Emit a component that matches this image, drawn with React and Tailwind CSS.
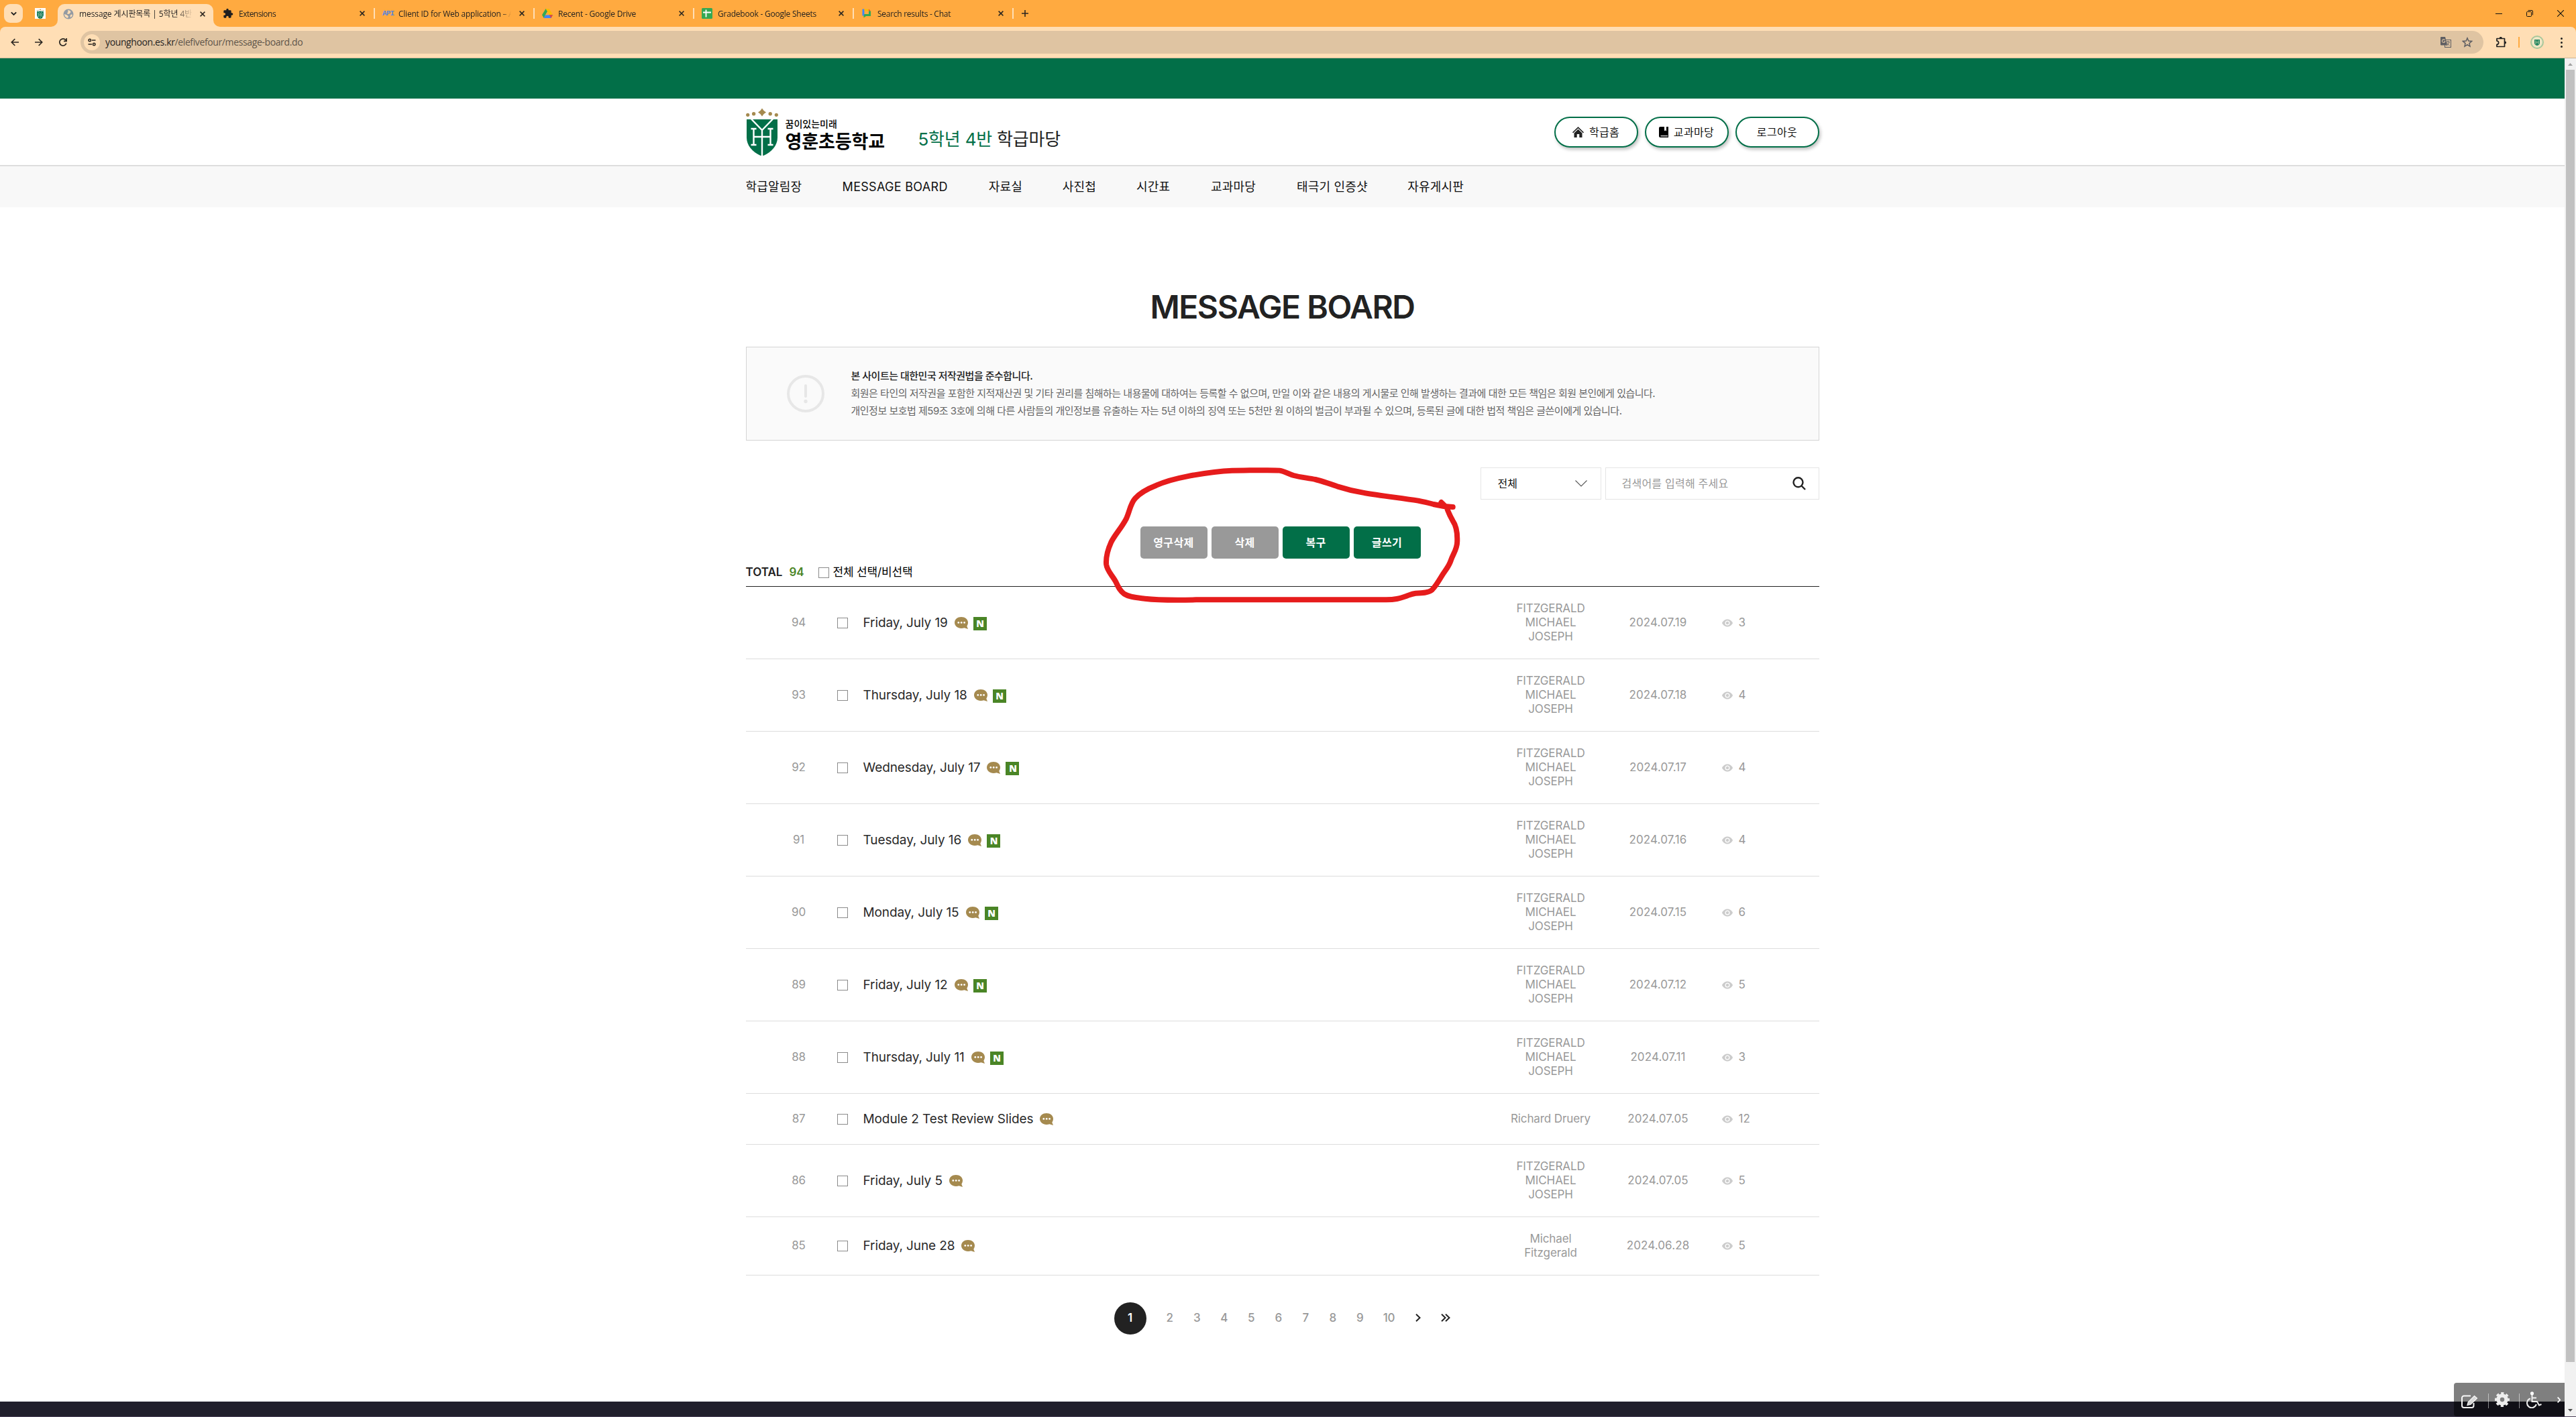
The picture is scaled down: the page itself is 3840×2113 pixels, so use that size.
import React from "react";

const tabs = [
  { icon: "ext", title: "Extensions", cls: "tracking-[-0.53px]" },
  { icon: "api", title: "Client ID for Web application – API", cls: "tracking-[-0.24px]" },
  { icon: "drive", title: "Recent - Google Drive", cls: "tracking-[-0.2px]" },
  { icon: "sheets", title: "Gradebook - Google Sheets", cls: "tracking-[-0.22px]" },
  { icon: "chat", title: "Search results - Chat", cls: "tracking-[-0.27px]" },
];

const nav = [
  ["학급알림장", "w-[84px]"],
  ["MESSAGE BOARD", "w-[158px] tracking-[0.3px]"],
  ["자료실", "w-[50px]"],
  ["사진첩", "w-[50px]"],
  ["시간표", "w-[51px]"],
  ["교과마당", "w-[68px]"],
  ["태극기 인증샷", "w-[105px]"],
  ["자유게시판", "w-[85px]"],
];

const FMJ = ["FITZGERALD", "MICHAEL", "JOSEPH"];
const rows = [
  { no: 94, title: "Friday, July 19", isNew: true, author: FMJ, date: "2024.07.19", views: 3, h: "h-[108px]" },
  { no: 93, title: "Thursday, July 18", isNew: true, author: FMJ, date: "2024.07.18", views: 4, h: "h-[108px]" },
  { no: 92, title: "Wednesday, July 17", isNew: true, author: FMJ, date: "2024.07.17", views: 4, h: "h-[108px]" },
  { no: 91, title: "Tuesday, July 16", isNew: true, author: FMJ, date: "2024.07.16", views: 4, h: "h-[108px]" },
  { no: 90, title: "Monday, July 15", isNew: true, author: FMJ, date: "2024.07.15", views: 6, h: "h-[108px]" },
  { no: 89, title: "Friday, July 12", isNew: true, author: FMJ, date: "2024.07.12", views: 5, h: "h-[108px]" },
  { no: 88, title: "Thursday, July 11", isNew: true, author: FMJ, date: "2024.07.11", views: 3, h: "h-[108px]" },
  { no: 87, title: "Module 2 Test Review Slides", author: ["Richard Druery"], date: "2024.07.05", views: 12, h: "h-[76px]" },
  { no: 86, title: "Friday, July 5", author: FMJ, date: "2024.07.05", views: 5, h: "h-[108px]" },
  { no: 85, title: "Friday, June 28", author: ["Michael", "Fitzgerald"], date: "2024.06.28", views: 5, h: "h-[87px]" },
];

function CloseX() {
  return (
    <svg className="size-2 shrink-0" viewBox="0 0 8 8" fill="none" stroke="#2b2620" strokeWidth="1.5">
      <path d="M0.6 0.6 7.4 7.4M7.4 0.6 0.6 7.4" />
    </svg>
  );
}

function Shield({ className }) {
  return (
    <svg className={className} viewBox="0 0 48 72" fill="none">
      <g fill="#a58a4f">
        <circle cx="2.7" cy="11.3" r="2.6" />
        <circle cx="11.6" cy="9.8" r="2.7" />
        <circle cx="36.2" cy="9.8" r="2.7" />
        <circle cx="45.3" cy="11.3" r="2.6" />
        <path d="M24 1.5 26.6 5 30 7.4 26.6 9.9 24 13.4 21.4 9.9 18 7.4 21.4 5Z" />
      </g>
      <path d="M1 18H47V45C47 58 37 68 24 73 11 68 1 58 1 45Z" fill="#026f48" />
      <g stroke="#fff" strokeWidth="2.4">
        <path d="M8 17.5 24 34 40 17.5M24 33V73" />
        <path d="M11.5 32V56M36.5 32V56M11.5 44H36.5" />
        <path d="M7.5 32H15.5M32.5 32H40.5M7.5 56H15.5M32.5 56H40.5" />
      </g>
    </svg>
  );
}

function TabIcon({ name }) {
  if (name === "ext")
    return (
      <svg className="size-4" viewBox="0 0 24 24" fill="#1f1f1f">
        <path d="M20.5 11H19V7a2 2 0 0 0-2-2h-4V3.500a2.500 2.500 0 0 0-5 0V5H4a2 2 0 0 0-2 2v3.800h1.500a2.700 2.700 0 0 1 0 5.400H2V20a2 2 0 0 0 2 2h3.800v-1.500a2.700 2.700 0 0 1 5.400 0V22H17a2 2 0 0 0 2-2v-4h1.500a2.500 2.500 0 0 0 0-5Z" />
      </svg>
    );
  if (name === "api")
    return <span className="font-['Liberation_Mono'] text-[11px] leading-4 font-bold tracking-[-0.8px] text-[#5a85dc]">API</span>;
  if (name === "drive")
    return (
      <svg className="h-3.5 w-4" viewBox="0 0 16 14">
        <path d="M5.500 0H10.500L5 9.300 2.700 14 0 9.300Z" fill="#34a853" />
        <path d="M5.500 0H10.500L16 9.300H10.800Z" fill="#fbbc04" />
        <path d="M5.200 9.300H16L13.400 14H2.600Z" fill="#4285f4" />
        <path d="M10.800 9.300H16L13.400 14Z" fill="#ea4335" />
        <path d="M8 4.400 10.800 9.300H5.200Z" fill="#ffaa40" />
      </svg>
    );
  if (name === "sheets")
    return (
      <svg className="size-4" viewBox="0 0 16 16">
        <rect width="16" height="16" rx="1.500" fill="#34a853" />
        <path d="M6.500 2.500V13.500M2 6.500H14" stroke="#fff" strokeWidth="1.800" />
      </svg>
    );
  return (
    <svg className="size-4" viewBox="0 0 16 16">
      <path d="M1.500 1.500H4.500V11.500H1.500Z" fill="#4285f4" />
      <path d="M4.500 1.500H11V4.500H4.500Z" fill="#fbbc04" />
      <path d="M11 1.500 14 4.500H11Z" fill="#ea4335" />
      <path d="M11 4.500H14V12H7L3.500 14.500V11.500L4.500 9H11Z" fill="#34a853" />
    </svg>
  );
}

function Browser() {
  return (
    <div className="h-[87px] font-['Open_Sans','Noto_Sans_CJK_KR',sans-serif] text-[#1f1f1f]">
      <div className="flex h-10 items-center bg-[#ffaa40] text-[12px] leading-4">
        <div className="ml-1.5 flex size-7 items-center justify-center rounded-[9px] bg-[#ffdeb5]">
          <svg className="h-[7px] w-[9px]" viewBox="0 0 9 7" fill="none" stroke="#1f1f1f" strokeWidth="1.800">
            <path d="M0.800 1.300 4.500 5 8.200 1.300" />
          </svg>
        </div>
        <div className="ml-[18px] flex size-4 items-center justify-center bg-white">
          <Shield className="h-[15px] w-2.5" />
        </div>
        <div className="relative ml-[18px] flex h-[34px] w-[232px] items-center self-end rounded-t-[10px] bg-[#ffdeb5] pb-[5px]">
          <svg className="absolute bottom-0 left-[-10px] size-2.5" viewBox="0 0 10 10" fill="#ffdeb5"><path d="M10 0V10H0A10 10 0 0 0 10 0Z" /></svg>
          <svg className="absolute right-[-10px] bottom-0 size-2.5" viewBox="0 0 10 10" fill="#ffdeb5"><path d="M0 0V10H10A10 10 0 0 1 0 0Z" /></svg>
          <svg className="ml-2 size-4" viewBox="0 0 16 16">
            <circle cx="8" cy="8" r="7.500" fill="#949ba3" />
            <path d="M7 2.500C9 2 11 3 11.500 5L9.500 7.500 7 8 6 6.500 7.500 5ZM2 8 6 9.500 8 11.500 7 14C4 13.500 2 11 2 8ZM12 8.500 14 9C13.500 11 12.500 12.500 11 13L10.500 10.500Z" fill="#ffdeb5" />
          </svg>
          <span className="ml-2 w-[170px] overflow-hidden whitespace-nowrap tracking-[-0.1px] [mask-image:linear-gradient(to_right,black_145px,transparent_170px)]">message 게시판목록 | 5학년 4반</span>
          <span className="ml-2.5"><CloseX /></span>
        </div>
        <div className="ml-[3px] flex">
          {tabs.map((t, i) => (
            <div key={i} className="flex h-7 w-[238px] items-center">
              <span className="ml-[11px] flex w-[18px] items-center justify-start"><TabIcon name={t.icon} /></span>
              <span className={"mt-px ml-[6px] w-[169px] overflow-hidden whitespace-nowrap [mask-image:linear-gradient(to_right,black_154px,transparent_168px)] " + t.cls}>{t.title}</span>
              <span className="ml-[11px]"><CloseX /></span>
              <span className="ml-auto h-4 w-0.5 bg-[#ffdeb5]" />
            </div>
          ))}
        </div>
        <svg className="ml-3 size-2.5" viewBox="0 0 10 10" stroke="#2b2620" strokeWidth="1.600"><path d="M5 0V10M0 5H10" /></svg>
        <div className="mr-[18px] ml-auto flex items-center gap-9">
          <svg className="size-2.5" viewBox="0 0 10 10" stroke="#111"><path d="M0 5.500H10" /></svg>
          <svg className="size-2.5" viewBox="0 0 10 10" fill="none" stroke="#111">
            <rect x="0.500" y="2.500" width="7" height="7" rx="1" />
            <path d="M2.500 0.500H8A1.500 1.500 0 0 1 9.500 2V7.500" />
          </svg>
          <svg className="size-2.5" viewBox="0 0 10 10" stroke="#111" strokeWidth="1.100"><path d="M0 0 10 10M10 0 0 10" /></svg>
        </div>
      </div>
      <div className="bg-[#ffaa40]">
        <div className="flex h-[46px] items-center rounded-t-lg bg-[#ffdeb5]">
          <div className="ml-4 flex gap-6 text-[#2b2620]">
            <svg className="size-3" viewBox="0 0 12 12" fill="none" stroke="currentColor" strokeWidth="1.700"><path d="M12 6H1.500M6.300 1 1.300 6 6.300 11" /></svg>
            <svg className="size-3" viewBox="0 0 12 12" fill="none" stroke="currentColor" strokeWidth="1.700"><path d="M0 6H10.500M5.700 1 10.700 6 5.700 11" /></svg>
            <svg className="size-3" viewBox="0 0 12 12" fill="none" stroke="currentColor" strokeWidth="1.700"><path d="M10.800 7.500A5.100 5.100 0 1 1 9.800 2.600L11 4" /><path d="M11.200 0V4.300H7" /></svg>
          </div>
          <div className="ml-5 flex h-[34px] w-[3582px] items-center rounded-full bg-[#dfc4a2]">
            <div className="ml-[5px] flex size-6 items-center justify-center rounded-full bg-[#ffdeb5]">
              <svg className="size-3" viewBox="0 0 12 12" fill="none" stroke="#2b2620" strokeWidth="1.600">
                <circle cx="2.800" cy="3" r="1.700" /><path d="M6 3H11.500M0.500 9H6" /><circle cx="9.200" cy="9" r="1.700" />
              </svg>
            </div>
            <span className="ml-2 text-[14px] leading-5 tracking-[-0.38px] whitespace-nowrap">younghoon.es.kr<span className="text-[#5e554a]">/elefivefour/message-board.do</span></span>
            <div className="mr-4 ml-auto flex items-center gap-4">
              <svg className="size-4" viewBox="0 0 16 16">
                <rect x="6.500" y="4.500" width="9" height="11" fill="none" stroke="#5e5e62" />
                <path d="M8.500 7.500H14M11.200 6V7.500M13 8C12 11 10.500 12 9 13M9.500 9C10.500 11 12 12 13.500 12.800" stroke="#5e5e62" fill="none" strokeWidth="0.900" />
                <path d="M1 0H7L10 12.500H1A1 1 0 0 1 0 11.500V1A1 1 0 0 1 1 0Z" fill="#5e5e62" />
                <path d="M6.500 4.800A2.300 2.300 0 1 0 6.800 7H4.800" stroke="#dfc4a2" fill="none" strokeWidth="1.100" />
              </svg>
              <svg className="size-4" viewBox="0 0 16 16" fill="none" stroke="#5e5e62" strokeWidth="1.500">
                <path d="M8 1.800 9.800 6.100 14.500 6.500 11 9.600 12 14.200 8 11.700 4 14.200 5 9.600 1.500 6.500 6.200 6.100Z" />
              </svg>
            </div>
          </div>
          <svg className="ml-[18px] h-4 w-[18px]" viewBox="0 0 18 16">
            <path d="M2 2.500H13.500V14.500H2V11.300A2.500 2.500 0 0 0 2 6Z" fill="none" stroke="#1f1f1f" strokeWidth="1.700" strokeLinejoin="round" />
            <path d="M5.700 2A2.100 2.100 0 0 1 9.900 2ZM14 6.400A2.100 2.100 0 0 1 14 10.600Z" fill="#1f1f1f" />
          </svg>
          <span className="ml-4 h-4 w-0.5 bg-[#ffaa40]" />
          <div className="ml-4 flex size-5 items-center justify-center rounded-full border-2 border-[#a9c79b] bg-[#efe6c4]">
            <svg className="size-2.5" viewBox="0 0 10 10"><path d="M1 1H9V6Q9 9 5 10 1 9 1 6Z" fill="#1f8360" /><path d="M3 2V8M7 2V8M3 5H7" stroke="#a9c79b" /></svg>
          </div>
          <div className="ml-[25px] flex flex-col gap-[3px]">
            <i className="size-[3px] rounded-full bg-[#1f1f1f]" /><i className="size-[3px] rounded-full bg-[#1f1f1f]" /><i className="size-[3px] rounded-full bg-[#1f1f1f]" />
          </div>
        </div>
      </div>
      <div className="h-px bg-[#c9b294]" />
    </div>
  );
}

function PillButton({ children }) {
  return (
    <button className="flex h-[46px] w-[125px] items-center justify-center gap-2 rounded-full border-2 border-[#026f48] bg-white text-[16px] tracking-[0.35px] text-[#111] shadow-[2px_3px_5px_rgba(0,0,0,0.25)]">
      {children}
    </button>
  );
}

function Header() {
  return (
    <div className="h-[101px] border-b-2 border-[#ddd] bg-white">
      <div className="mx-auto flex h-full w-[1600px] items-start">
        <Shield className="mt-[13px] h-[72px] w-12" />
        <div className="mt-[28px] ml-[11px] w-[150px] whitespace-nowrap text-black">
          <div className="text-[14px] leading-[20px] font-medium">꿈이있는미래</div>
          <div className="mt-[1px] text-[27px] leading-[31px] font-bold tracking-[-0.1px]">영훈초등학교</div>
        </div>
        <div className="mt-[43px] ml-[48px] text-[26px] leading-[36px] tracking-[-0.2px] whitespace-nowrap text-[#222]">
          <span className="text-[#026f48]">5학년 4반</span> 학급마당
        </div>
        <div className="mt-[27px] ml-auto flex gap-2.5">
          <PillButton>
            <svg className="h-4 w-[17px]" viewBox="0 0 17 16" fill="#222">
              <path d="M8.500 0 17 8.300 16 9.500 8.500 2.200 1 9.500 0 8.300Z" />
              <path d="M8.500 3.800 14.500 9.500V16H10.300V11H6.700V16H2.500V9.500Z" />
            </svg>
            <span>학급홈</span>
          </PillButton>
          <PillButton>
            <svg className="h-4 w-3.5" viewBox="0 0 14 16">
              <path d="M2 0H14V16H2A2 2 0 0 1 0 14V2A2 2 0 0 1 2 0Z" fill="#000" />
              <path d="M8 0H11V6.500L9.500 5.300 8 6.500Z" fill="#fff" />
              <path d="M2.500 12.800H13V14.500H2.500Z" fill="#bbb" />
            </svg>
            <span>교과마당</span>
          </PillButton>
          <PillButton><span>로그아웃</span></PillButton>
        </div>
      </div>
    </div>
  );
}

function Checkbox() {
  return <span className="block size-4 shrink-0 border border-[#8a8a8a] bg-white" />;
}

function Row({ r }) {
  return (
    <div className={"flex items-center border-b border-[#ddd] text-[17px] text-[#999] " + r.h}>
      <span className="ml-[44px] w-[70px] text-center tracking-[-0.2px]">{r.no}</span>
      <span className="ml-[22px]"><Checkbox /></span>
      <span className="ml-[23px] text-[19px] leading-6 tracking-[-0.1px] whitespace-nowrap text-[#2a2a2a]">{r.title}</span>
      <svg className="ml-2.5 h-[18px] w-5" viewBox="0 0 20 18">
        <path d="M10 0C15.500 0 20 3.500 20 8.300 20 10.500 19.300 12.400 18.300 13.800L20 18 14.500 16.300C13.200 16.700 11.700 16.900 10 16.900 4.500 16.900 0 13.200 0 8.400 0 3.500 4.500 0 10 0Z" fill="#a58a4f" />
        <g fill="#fff"><circle cx="5.800" cy="8.400" r="1.400" /><circle cx="10.200" cy="8.400" r="1.400" /><circle cx="14.600" cy="8.400" r="1.400" /></g>
      </svg>
      {r.isNew ? (
        <span className="mt-[2px] ml-2 flex size-5 items-center justify-center bg-[#4a8526] pl-px font-['Noto_Sans'] text-[14px] leading-5 font-black text-white">N</span>
      ) : null}
      <span className="mr-[10px] ml-auto flex w-[140px] flex-col text-center leading-[21px] tracking-[-0.1px] whitespace-nowrap">
        {r.author.map((a) => <span key={a}>{a}</span>)}
      </span>
      <span className="mr-[15px] w-[160px] text-center tracking-[0.1px]">{r.date}</span>
      <span className="flex w-[145px] items-center gap-[9px]">
        <svg className="h-3 w-4" viewBox="0 0 16 12">
          <path d="M0 6C2 2 5 0.500 8 0.500S14 2 16 6C14 10 11 11.500 8 11.500S2 10 0 6Z" fill="#ccc" />
          <circle cx="8" cy="6" r="2.900" fill="none" stroke="#fff" strokeWidth="1.300" />
        </svg>
        {r.views}
      </span>
    </div>
  );
}

function Pagination() {
  return (
    <div className="mt-[40px] ml-[549px] flex h-12 items-center text-[17px] font-medium text-[#999]">
      <span className="mr-[15px] flex size-12 items-center justify-center rounded-full bg-[#222] font-semibold text-white">1</span>
      {[2, 3, 4, 5, 6, 7, 8, 9].map((n) => (
        <span key={n} className="w-[40.500px] text-center">{n}</span>
      ))}
      <span className="w-[46px] text-center tracking-[-0.3px]">10</span>
      <svg className="mb-[2px] ml-[16px] h-3 w-2" viewBox="0 0 8 12" fill="none" stroke="#222" strokeWidth="2"><path d="M1 0.800 6.500 6 1 11.200" /></svg>
      <svg className="mb-[2px] ml-[30px] h-3 w-3.5" viewBox="0 0 14 12" fill="none" stroke="#222" strokeWidth="2"><path d="M1 0.800 6.500 6 1 11.200M7 0.800 12.500 6 7 11.200" /></svg>
    </div>
  );
}

function ActionButton({ children, tone }) {
  return (
    <button className={"h-12 w-[100px] rounded-[5px] text-[16px] font-bold tracking-[0.4px] text-white " + tone}>{children}</button>
  );
}

function Board() {
  return (
    <div className="mx-auto w-[1600px]">
      <h1 className="mt-[119px] text-center text-[48px] leading-[60px] font-semibold tracking-[-1.45px] text-[#222]">MESSAGE BOARD</h1>
      <div className="mt-[29px] flex h-[140px] items-center border border-[#d5d5d5] bg-[#fafafa]">
        <svg className="ml-[60px] size-14" viewBox="0 0 56 56" fill="none" stroke="#e7e7e7">
          <circle cx="28" cy="28" r="26" strokeWidth="4" />
          <path d="M28 16V32" strokeWidth="4" strokeLinecap="round" />
          <circle cx="28" cy="39.500" r="2.700" fill="#e7e7e7" stroke="none" />
        </svg>
        <div className="ml-10 text-[15px] leading-[26px] tracking-[-0.5px] whitespace-nowrap text-[#666]">
          <p className="font-medium text-[#222]">본 사이트는 대한민국 저작권법을 준수합니다.</p>
          <p>회원은 타인의 저작권을 포함한 지적재산권 및 기타 권리를 침해하는 내용물에 대하여는 등록할 수 없으며, 만일 이와 같은 내용의 게시물로 인해 발생하는 결과에 대한 모든 책임은 회원 본인에게 있습니다.</p>
          <p>개인정보 보호법 제59조 3호에 의해 다른 사람들의 개인정보를 유출하는 자는 5년 이하의 징역 또는 5천만 원 이하의 벌금이 부과될 수 있으며, 등록된 글에 대한 법적 책임은 글쓴이에게 있습니다.</p>
        </div>
      </div>
      <div className="mt-10 flex justify-end gap-1.5 text-[16px]">
        <div className="flex h-12 w-[180px] items-center justify-between border border-[#e5e5e5] pr-5 pl-[25px] text-[#111]">
          전체
          <svg className="h-2.5 w-[18px]" viewBox="0 0 18 10" fill="none" stroke="#555" strokeWidth="1.100"><path d="M0.500 0.500 9 9 17.500 0.500" /></svg>
        </div>
        <div className="flex h-12 w-[319px] items-center justify-between border border-[#e5e5e5] pr-[19px] pl-6 tracking-[0.23px] text-[#999]">
          검색어를 입력해 주세요
          <svg className="size-5" viewBox="0 0 20 20" fill="none" stroke="#222" strokeWidth="2.400"><circle cx="8.500" cy="8.300" r="7" /><path d="M13.500 13.500 19 19" /></svg>
        </div>
      </div>
      <div className="mt-10 ml-[588px] flex gap-1.5">
        <ActionButton tone="bg-[#999]">영구삭제</ActionButton>
        <ActionButton tone="bg-[#999]">삭제</ActionButton>
        <ActionButton tone="bg-[#026f48]">복구</ActionButton>
        <ActionButton tone="bg-[#026f48]">글쓰기</ActionButton>
      </div>
      <div className="flex h-[42px] items-center border-b border-[#222] text-[17px] whitespace-nowrap">
        <span className="w-[65px] font-semibold text-[#222]">TOTAL</span>
        <span className="w-[43px] font-semibold text-[#4a8526]">94</span>
        <Checkbox />
        <span className="ml-1.5 tracking-[-0.15px] text-black">전체 선택/비선택</span>
      </div>
      {rows.map((r) => <Row key={r.no} r={r} />)}
      <Pagination />
    </div>
  );
}

function Toolbox() {
  return (
    <div className="absolute right-[17px] bottom-px flex h-[50px] w-[165px] items-center rounded-l-[4px] bg-black/50 pl-[11px]">
      <svg className="mt-[5px] h-5 w-[25px]" viewBox="0 0 25 20" fill="none" stroke="#fff" opacity="0.95">
        <path d="M14 1.500H4A3 3 0 0 0 1 4.500V16A3 3 0 0 0 4 19H15.500A3 3 0 0 0 18.500 16V12" strokeWidth="2" />
        <path d="M9 15.500 10.200 10.800 19.500 1.500 23.500 5 14 14.300Z" fill="#ddd" stroke="#fff" strokeWidth="1.200" />
      </svg>
      <span className="mt-1 ml-[15px] h-[22px] w-px bg-white/50" />
      <svg className="ml-[9px] size-[22px]" viewBox="0 0 22 22" fill="none">
        <circle cx="11" cy="11" r="6" stroke="#eee" strokeWidth="5.500" />
        <circle cx="11" cy="11" r="9.500" stroke="#eee" strokeWidth="3" strokeDasharray="4.200 3.261" strokeDashoffset="2.100" />
      </svg>
      <span className="mt-1 ml-[14px] h-[22px] w-px bg-white/50" />
      <svg className="ml-[10px] h-[25px] w-[23px]" viewBox="0 0 23 25" fill="none" stroke="#eee" strokeWidth="2">
        <circle cx="8.500" cy="2.800" r="2.600" fill="#fff" stroke="none" />
        <path d="M8.500 5V15H16L19 20.500 22.500 19M8.500 9.500H15" />
        <path d="M6 10.500A7 7 0 1 0 14.800 19" />
      </svg>
      <svg className="ml-[23px] h-[9px] w-[5px]" viewBox="0 0 5 9" fill="none" stroke="#fff" strokeWidth="1.800"><path d="M0.600 0.600 4.200 4.500 0.600 8.400" /></svg>
    </div>
  );
}

function Scrollbar() {
  return (
    <div className="flex w-[17px] shrink-0 flex-col items-center bg-[#f1f1f1]">
      <svg className="mt-[7px] h-1 w-[7px]" viewBox="0 0 7 4" fill="#a0a0a0"><path d="M3.500 0 7 4H0Z" /></svg>
      <div className="mt-[6px] h-[1927px] w-[13px] bg-[#c1c1c1]" />
      <svg className="mt-auto mb-[7px] h-1 w-[7px]" viewBox="0 0 7 4" fill="#505050"><path d="M0 0H7L3.500 4Z" /></svg>
    </div>
  );
}

function Scribble() {
  return (
    <svg className="pointer-events-none absolute top-[680px] left-[1630px] h-[240px] w-[600px]" viewBox="0 0 1568 720" preserveAspectRatio="none" fill="none">
      <path
        d="M1400 228C1375 227 1350 223 1325 216C1300 208 1280 204 1265 200C1200 188 1120 178 1050 164C1010 156 980 147 950 136C920 124 890 112 865 105C835 98 805 95 780 87C760 80 745 69 725 65C705 61 600 65 540 65C490 67 415 80 365 91C310 103 275 116 245 131C205 149 180 166 162 190C143 215 142 245 128 280C110 320 85 350 69 385C56 418 48 455 50 485C53 515 75 535 88 565C98 590 105 605 120 617C140 632 170 634 200 638C260 646 320 645 400 643H1140C1175 643 1190 638 1220 626C1230 622 1240 616 1255 614C1280 613 1305 612 1318 600C1332 584 1342 565 1355 540C1372 508 1385 495 1393 465C1402 435 1418 415 1417 380C1418 345 1412 310 1400 290C1390 270 1383 255 1377 232L1355 207"
        stroke="#e61c1c" strokeWidth="8" strokeLinecap="round" strokeLinejoin="round" vectorEffect="non-scaling-stroke"
      />
    </svg>
  );
}

export default function App() {
  return (
    <div className="relative flex h-[2113px] w-[3840px] flex-col overflow-hidden bg-white font-[Inter,'Noto_Sans_CJK_KR',sans-serif]">
      <Browser />
      <div className="flex h-[2025px]">
        <div className="flex flex-1 flex-col">
          <div className="h-[60px] bg-[#026f48]" />
          <Header />
          <nav className="h-[61px] bg-[#f8f8f8]">
            <div className="mx-auto flex h-[60px] w-[1600px] items-center gap-[60.100px] text-[18px] tracking-[0.2px] whitespace-nowrap text-[#111]">
              {nav.map(([label, w]) => <span key={label} className={w}>{label}</span>)}
            </div>
          </nav>
          <Board />
          <div className="mt-auto h-[22px] bg-[#211f2c]" />
        </div>
        <Scrollbar />
      </div>
      <div className="h-px bg-[#4b4058]" />
      <Toolbox />
      <Scribble />
    </div>
  );
}
